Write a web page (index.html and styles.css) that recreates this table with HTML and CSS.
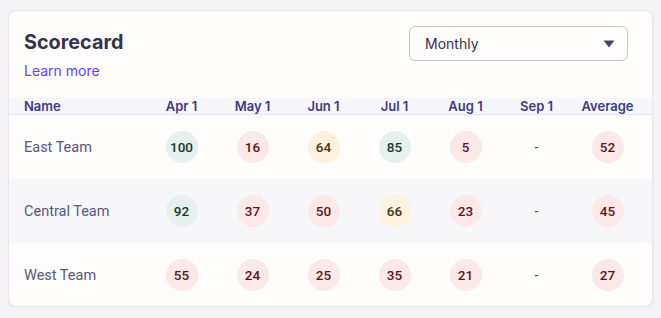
FILE: index.html
```html
<!DOCTYPE html>
<html>
<head>
<meta charset="utf-8">
<link rel="stylesheet" href="styles.css">
</head>
<body>
<div class="card">
  <div class="top">
    <div class="heading">
      <h1 class="title">Scorecard</h1>
      <a class="learn" href="#">Learn more</a>
    </div>
    <div class="select">
      <span>Monthly</span>
      <svg class="caret" width="12" height="8" viewBox="0 0 12 8"><path d="M0.5 0.5 H11.5 L6 7.5 Z" fill="#47456a"/></svg>
    </div>
  </div>
  <div class="table">
    <div class="row head">
      <div class="name">Name</div>
      <div class="c">Apr 1</div><div class="c">May 1</div><div class="c">Jun 1</div><div class="c">Jul 1</div><div class="c">Aug 1</div><div class="c">Sep 1</div><div class="c">Average</div>
    </div>
    <div class="row">
      <div class="name">East Team</div>
      <div class="c"><span class="b g">100</span></div>
      <div class="c"><span class="b r">16</span></div>
      <div class="c"><span class="b y">64</span></div>
      <div class="c"><span class="b g">85</span></div>
      <div class="c"><span class="b r">5</span></div>
      <div class="c dash">-</div>
      <div class="c"><span class="b r">52</span></div>
    </div>
    <div class="row alt">
      <div class="name">Central Team</div>
      <div class="c"><span class="b g">92</span></div>
      <div class="c"><span class="b r">37</span></div>
      <div class="c"><span class="b r">50</span></div>
      <div class="c"><span class="b y">66</span></div>
      <div class="c"><span class="b r">23</span></div>
      <div class="c dash">-</div>
      <div class="c"><span class="b r">45</span></div>
    </div>
    <div class="row">
      <div class="name">West Team</div>
      <div class="c"><span class="b r">55</span></div>
      <div class="c"><span class="b r">24</span></div>
      <div class="c"><span class="b r">25</span></div>
      <div class="c"><span class="b r">35</span></div>
      <div class="c"><span class="b r">21</span></div>
      <div class="c dash">-</div>
      <div class="c"><span class="b r">27</span></div>
    </div>
  </div>
</div>
</body>
</html>
```
FILE: styles.css
```css
html, body { margin: 0; padding: 0; }
body {
  background: #f3f2f5;
  padding: 10px 8px 0 8px;
  font-family: Inter, "Noto Sans", sans-serif;
}
.card {
  width: 645px;
  height: 297px;
  box-sizing: border-box;
  background: #fffdfc;
  border: 1px solid #e7e6ea;
  border-radius: 8px;
  box-shadow: 0 1px 2px rgba(0,0,0,0.06);
  overflow: hidden;
}
.top {
  display: flex;
  justify-content: space-between;
  padding: 15px 24px 0 15px;
  height: 72px;
}
.heading { display: flex; flex-direction: column; }
.title {
  margin: 0;
  padding-top: 4px;
  font-size: 19.8px;
  font-weight: 700;
  color: #34324f;
  line-height: 24px;
}
.learn {
  margin-top: 8px;
  font-size: 14px;
  color: #6a3df5;
  text-decoration: none;
  line-height: 18px;
}
.select {
  width: 219px;
  height: 35px;
  box-sizing: border-box;
  border: 1px solid #c7c6cc;
  border-radius: 6px;
  display: flex;
  align-items: center;
  justify-content: space-between;
  padding: 0 12px 0 15px;
  font-size: 14px;
  color: #34324f;
}
.caret { display: block; }
.row {
  display: grid;
  grid-template-columns: 1fr repeat(7, 71px);
  padding: 0 9px 0 15px;
  height: 64px;
  align-items: center;
}
.row.head {
  height: 16px;
  background: #f7f7fb;
  border-bottom: 1px solid #dfe4f8;
  font-weight: 600;
  color: #3f3a86;
}
.row.alt { background: #f7f7fa; }
.name {
  font-family: Roboto, "Noto Sans", sans-serif;
  font-size: 14.5px;
  color: #5a5878;
}
.head .name, .head .c { font-family: Inter, sans-serif; font-size: 13px; color: #3f3a86; }
.c { display: flex; justify-content: center; }
.dash { font-family: Roboto, sans-serif; font-size: 13px; color: #555; font-weight: 500; }
.b {
  width: 32px;
  height: 32px;
  border-radius: 50%;
  display: flex;
  align-items: center;
  justify-content: center;
  font-family: Roboto, sans-serif;
  font-weight: 500;
  font-size: 13.5px;
}
.g { background: #e5f0ef; color: #17392c; }
.r { background: #fce8e9; color: #5a1520; }
.y { background: #fcf2de; color: #4a3316; }
```
